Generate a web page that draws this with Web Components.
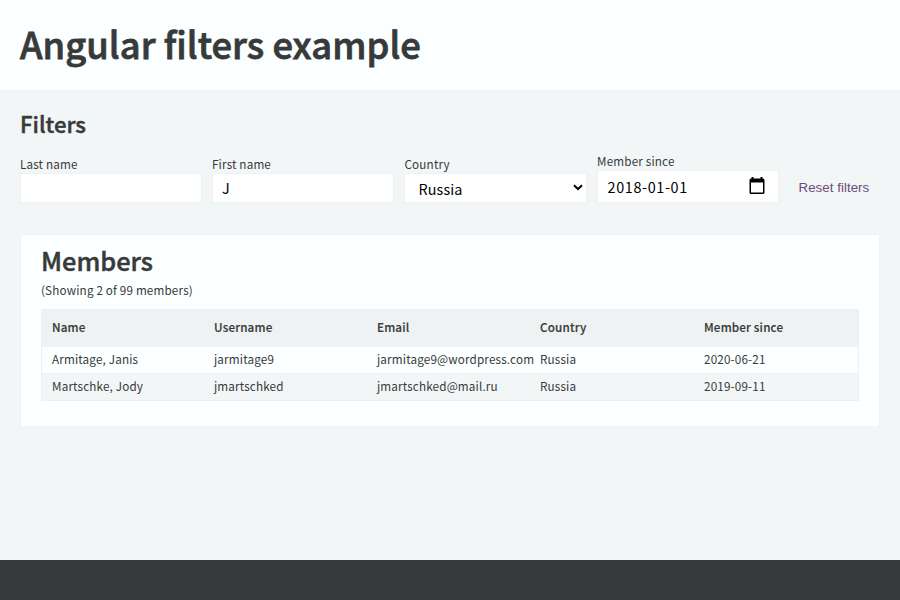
<!DOCTYPE html>
<html lang="en">
<head>
<meta charset="utf-8">
<title>Angular filters example</title>
<style>
html,body{margin:0;height:100%}
body{font:400 11.7px/20px "Noto Sans CJK JP",sans-serif;letter-spacing:.16px;color:#373a3a;background:#f3f6f7;overflow:hidden}
</style>
</head>
<body>
<template id="app">
<style>
:host{display:flex;flex-direction:column;height:600px}
header{height:90px;box-sizing:border-box;padding:13px 20px 0;background:#fbffff}
h1,h2{margin:0;font-weight:500;letter-spacing:0}
h1{font-size:36.3px;line-height:60px;letter-spacing:.04px;-webkit-text-stroke:.8px #373a3a}
h2{font-size:22.15px;line-height:30px;padding:18px 20px 2px;-webkit-text-stroke:.45px #373a3a}
main{flex:1}
.filters{display:grid;grid-template-columns:182px 182px 183px 182px 1fr;column-gap:10px;align-items:end;height:63px;padding:0 20px}
footer{height:40px;background:#373a3b}
members-panel{margin:31px 20px 0}
</style>
<header><h1>Angular filters example</h1></header>
<main>
<h2>Filters</h2>
<div class="filters">
<filter-field label="Last name"></filter-field>
<filter-field label="First name">J</filter-field>
<filter-field label="Country" kind="select">Russia</filter-field>
<filter-field label="Member since" kind="date">2018-01-01</filter-field>
<reset-button>Reset filters</reset-button>
</div>
<members-panel></members-panel>
</main>
<footer></footer>
</template>
<template id="field">
<style>
:host{display:block}
label{display:block;line-height:20px;height:19px}
.box{display:flex;align-items:center;justify-content:space-between;box-sizing:border-box;height:30px;border:1px solid #eff2f3;background:#fff;padding:0 9px;color:#000;font-size:14.4px;letter-spacing:.1px}
svg{display:none;flex:none}
:host([kind=select]) .box{padding:1px 3px 0 13.500px;letter-spacing:.1px}
:host([kind=select]) label{padding-left:.5px}
:host([kind=select]) .arrow{display:block;margin-top:-3px}
:host([kind=date]) .box{height:33px;padding:1px 13.500px 0 9.500px;letter-spacing:.65px}
:host([kind=date]) .cal{display:block;margin-top:-2px}
</style>
<label></label>
<div class="box"><span><slot></slot></span>
<svg class="arrow" width="10" height="7" viewBox="0 0 10 7"><path d="M1 1.2 5 5 9 1.2" fill="none" stroke="#000" stroke-width="2"/></svg>
<svg class="cal" width="16" height="18" viewBox="0 0 16 18"><path fill="#000" fill-rule="evenodd" d="M2.500 0h2v1.500h7V0h2v1.500H14a1.500 1.500 0 0 1 1.500 1.500v12.500a1.500 1.500 0 0 1-1.500 1.500H2A1.500 1.500 0 0 1 .5 15.500V3A1.500 1.500 0 0 1 2 1.500h.5zM2 5.500V15.500h12V5.500z"/></svg>
</div>
</template>
<template id="reset">
<style>
:host{display:block;height:31px}
button{all:unset;display:block;padding-left:9.500px;font:13.333px/31px "Liberation Sans",Arial,sans-serif;letter-spacing:.03px;color:#6b4c7a;white-space:nowrap}
</style>
<button><slot></slot></button>
</template>
<template id="panel">
<style>
:host{display:block;box-sizing:border-box;height:193px;border:1px solid #eff2f3;background:#fbffff;padding:7px 20px 0}
h2{margin:0;font-size:25.35px;line-height:36px;font-weight:500;letter-spacing:0;-webkit-text-stroke:.5px #373a3a}
p{margin:0;padding-top:2px;line-height:20px;height:29px}
.table{border:1px solid #eef1f2}
</style>
<h2>Members</h2>
<p>(Showing 2 of 99 members)</p>
<div class="table">
<member-row head cells="Name|Username|Email|Country|Member since"></member-row>
<member-row cells="Armitage, Janis|jarmitage9|jarmitage9@wordpress.com|Russia|2020-06-21"></member-row>
<member-row odd cells="Martschke, Jody|jmartschked|jmartschked@mail.ru|Russia|2019-09-11"></member-row>
</div>
</template>
<template id="row">
<style>
:host{display:grid;grid-template-columns:162px 163px 163px 164px 1fr;box-sizing:border-box;height:26px;line-height:24px;padding-left:10px;white-space:nowrap}
:host([head]){height:37px;line-height:34px;background:#eff2f3;font-weight:500;-webkit-text-stroke:.15px #373a3a}
:host([odd]){height:27px;border-top:1px solid #eef1f2;background:#f3f6f7}
</style>
</template>
<filters-app></filters-app>
<script>
class Base extends HTMLElement{
  connectedCallback(){
    if(this.shadowRoot)return;
    this.attachShadow({mode:'open'}).append(document.getElementById(this.constructor.tpl).content.cloneNode(true));
    this.setup();
  }
  setup(){}
}
customElements.define('filter-field',class extends Base{
  static tpl='field';
  setup(){this.shadowRoot.querySelector('label').textContent=this.getAttribute('label')}
});
customElements.define('reset-button',class extends Base{static tpl='reset'});
customElements.define('member-row',class extends Base{
  static tpl='row';
  setup(){for(const t of this.getAttribute('cells').split('|')){const s=document.createElement('span');s.textContent=t;this.shadowRoot.append(s)}}
});
customElements.define('members-panel',class extends Base{static tpl='panel'});
customElements.define('filters-app',class extends Base{static tpl='app'});
</script>
</body>
</html>
